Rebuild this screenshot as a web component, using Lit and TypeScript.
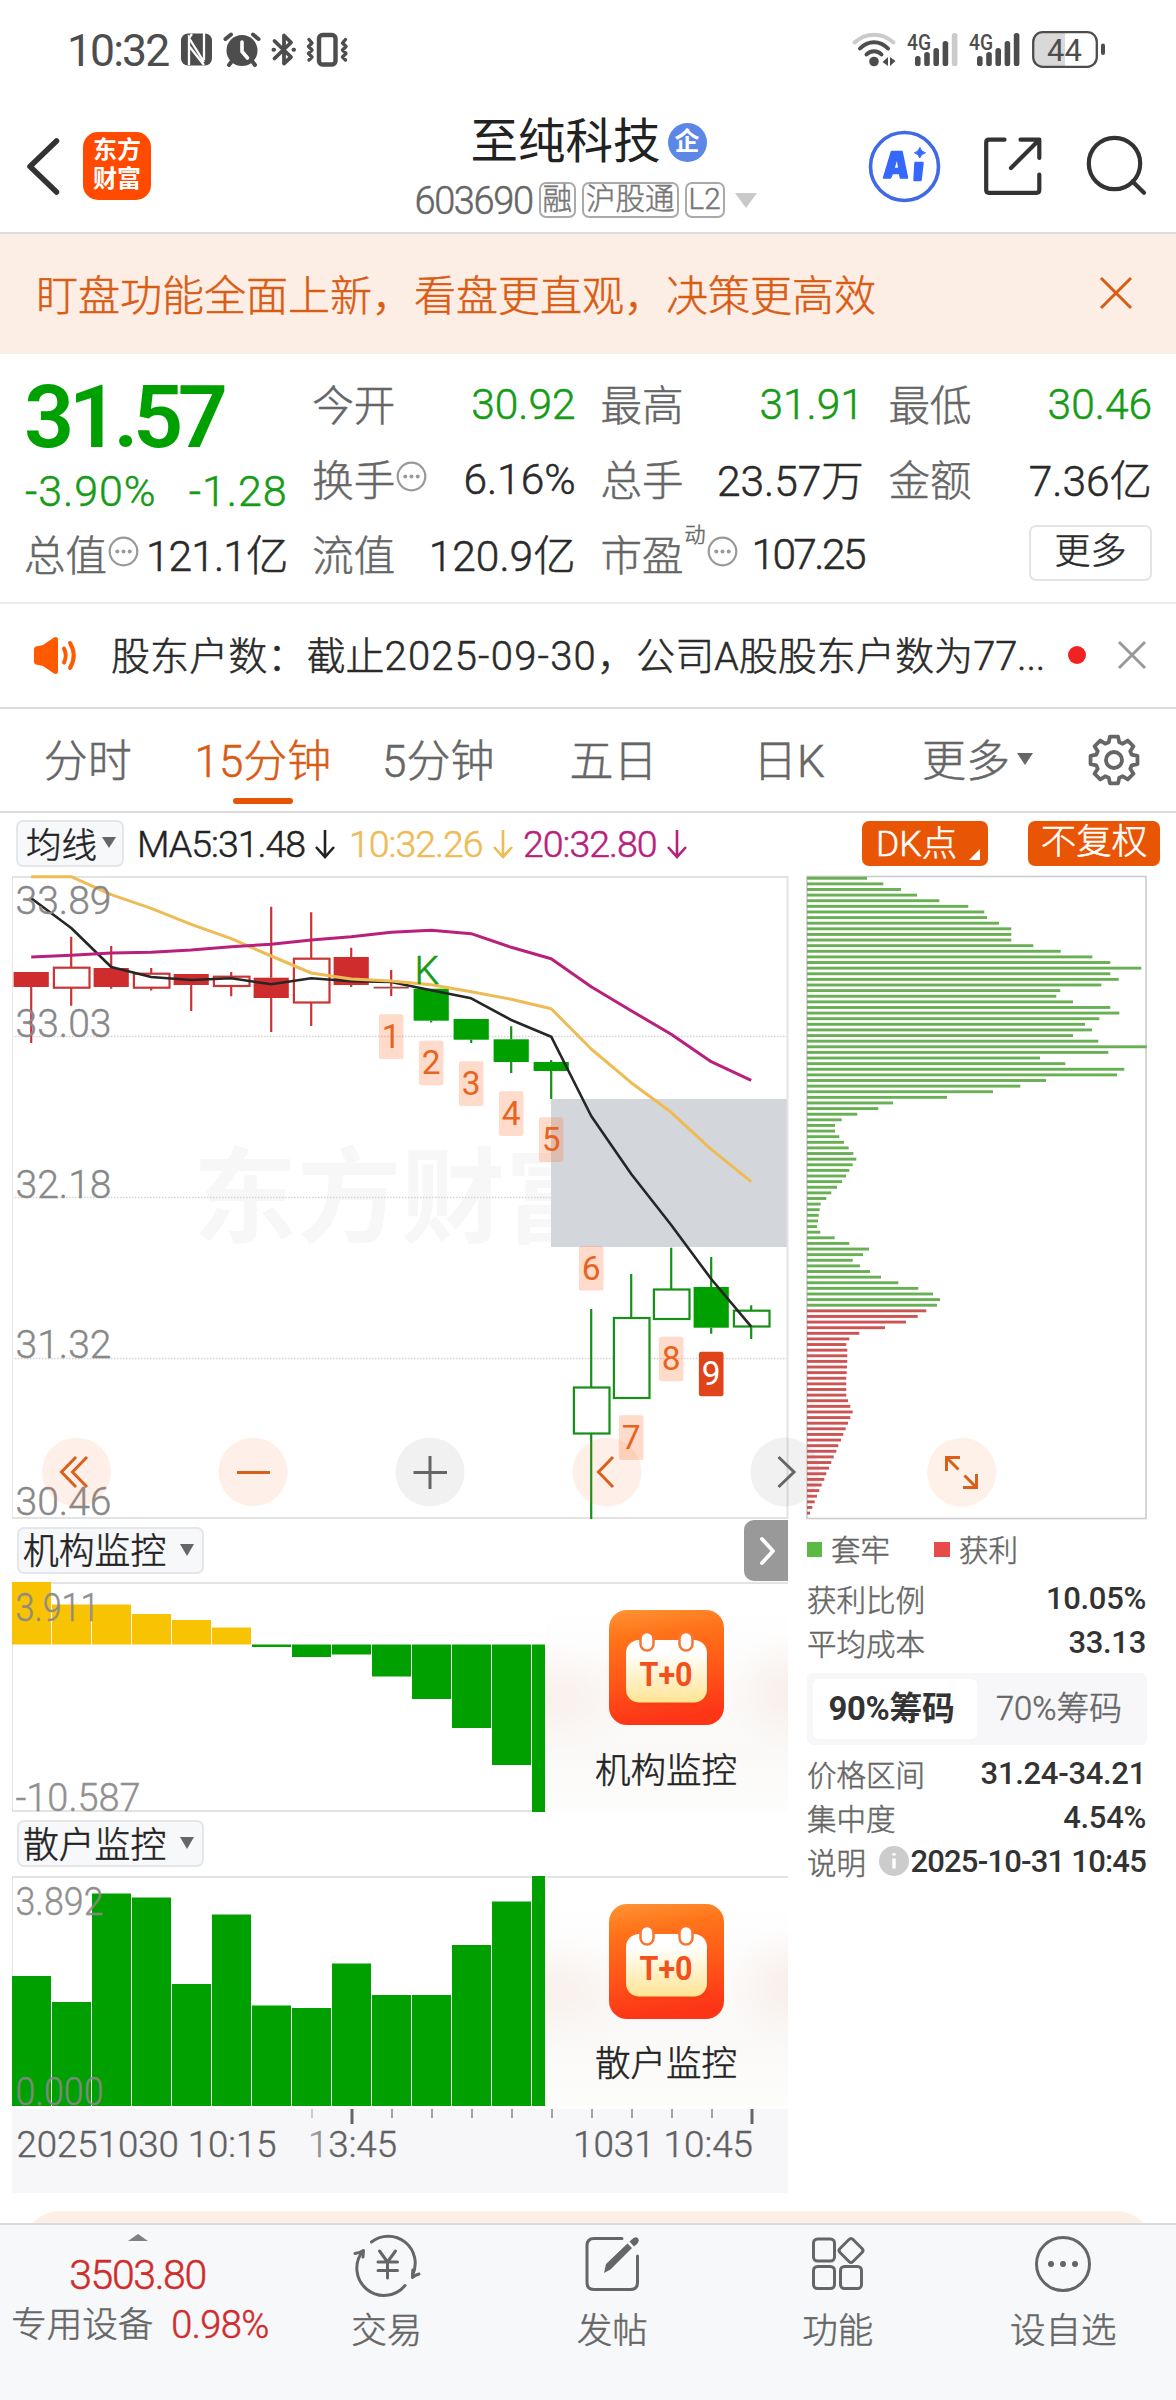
import { LitElement, html, svg, css } from "lit";
import { customElement, property } from "lit/decorators.js";

const base = css`
  :host {
    display: block;
    box-sizing: border-box;
    font-family: Roboto, "Noto Sans CJK SC", sans-serif;
    font-weight: 300;
    -webkit-text-stroke: 0.5px currentColor;
    color: #333;
  }
  * {
    box-sizing: border-box;
  }
  svg {
    display: block;
    flex: none;
    overflow: visible;
  }
`;

/* ---------- status bar ---------- */

@customElement("status-bar")
export class StatusBar extends LitElement {
  static styles = [
    base,
    css`
      :host {
        height: 100px;
        font-weight: 400;
        -webkit-text-stroke: 0;
      }
      .bar {
        display: flex;
        justify-content: space-between;
        padding: 28px 70px 0 67px;
      }
      .left {
        display: flex;
        align-items: center;
        height: 44px;
      }
      .time {
        font-size: 44.5px;
        letter-spacing: -1.9px;
        width: 113px;
        padding-top: 2px;
        color: #4d4d4d;
        white-space: nowrap;
      }
      text {
        font-family: Roboto, sans-serif;
        fill: #4d4d4d;
      }
    `,
  ];

  private signal(x: number, full: boolean) {
    const tops = [56, 52, 48, 41, 33];
    return svg`
      <text x=${x - 1} y="49.5" font-size="22.5" font-weight="500" textLength="24" lengthAdjust="spacingAndGlyphs">4G</text>
      ${tops.map(
        (t, i) => svg`<rect x=${x + 7 + i * 9.2} y=${t} width="5.6" height=${66 - t} rx="2.6"
          fill=${i === 4 && !full ? "#cbcbcb" : "#4d4d4d"} />`
      )}`;
  }

  render() {
    return html`<div class="bar">
      <div class="left">
        <span class="time">10:32</span>
        <svg width="170" height="44" viewBox="180 28 170 44">
          <rect x="181" y="33.500" width="31" height="32" rx="7" fill="#4d4d4d" />
          <path d="M189 65V38L204 62M189 46L204 65M204 33V60M189 38L192 34" fill="none" stroke="#fff" stroke-width="2.300" />
          <path d="M193.500 41L201.500 54V42.500L194 33.500Z" fill="#4d4d4d" />
          <g fill="none" stroke="#4d4d4d" stroke-linecap="round">
            <circle cx="242" cy="50.500" r="15.500" fill="#4d4d4d" stroke="none" />
            <path d="M225.500 39L231 34.500M258.500 39L253 34.500M232 61L229 65M252 61L255 65" stroke-width="4" />
            <path d="M242 42V51.500L247.500 58" stroke="#fff" stroke-width="3.600" />
            <path d="M274.500 41L291 57L284 63.500V35.500L291 42.500L274.500 58.500" stroke-width="3.800" stroke-linejoin="round" />
            <path d="M273.500 49.700H274M293.500 49.700H294" stroke-width="4" />
            <rect x="319" y="35" width="16.500" height="29.500" rx="3.500" stroke-width="4.400" />
            <path d="M309 39.500L312 43L308.500 46.500L312 50L308.500 53.500L312 57L309 60M345.500 39.500L342.500 43L346 46.500L342.500 50L346 53.500L342.500 57L345.500 60" stroke-width="3.400" stroke-linejoin="round" />
          </g>
        </svg>
      </div>
      <svg width="256" height="44" viewBox="850 28 256 44">
        <g fill="none" stroke="#4d4d4d" stroke-linecap="round" stroke-width="4">
          <path d="M854.500 42.500C866 32 882 32 893.500 42.500" stroke="#cbcbcb" />
          <path d="M860 48.500C868 40 880 40 888 48.500M866.500 54.500C870.500 50 877.500 50 881.500 54.500" />
        </g>
        <circle cx="874" cy="61.500" r="4.800" fill="#4d4d4d" />
        <path d="M888 57V66L882.500 62ZM890 57V66L895.500 61Z" fill="#4d4d4d" />
        ${this.signal(908, false)} ${this.signal(970, true)}
        <path d="M1065 33V66H1042Q1034 66 1034 58V41Q1034 33 1042 33Z" fill="#d9d9d9" />
        <rect x="1033.200" y="32.200" width="63.600" height="34.600" rx="9.500" fill="none" stroke="#4d4d4d" stroke-width="2.300" />
        <rect x="1101" y="43.500" width="4" height="11.500" rx="2" fill="#4d4d4d" />
        <text x="1047" y="61" font-size="31" textLength="35">44</text>
      </svg>
    </div>`;
  }
}

/* ---------- title bar ---------- */

@customElement("stock-header")
export class StockHeader extends LitElement {
  static styles = [
    base,
    css`
      :host {
        height: 134px;
        border-bottom: 2px solid #dcdcdc;
      }
      .row {
        display: grid;
        grid-template-columns: 400px 376px 400px;
        height: 132px;
      }
      .left {
        display: flex;
        align-items: center;
        gap: 22px;
        padding-left: 26px;
      }
      .logo {
        width: 68px;
        height: 68px;
        border-radius: 15px;
        background: #ff4a00;
        color: #fff;
        font-weight: 700;
        -webkit-text-stroke: 0;
        font-size: 24px;
        line-height: 29px;
        text-align: center;
        padding-top: 4px;
      }
      .mid {
        display: flex;
        flex-direction: column;
        align-items: center;
        padding-top: 10px;
      }
      .name {
        display: flex;
        align-items: center;
        gap: 7px;
        height: 64px;
        font-size: 47.5px;
        line-height: 64px;
        color: #222;
        font-weight: 400;
        -webkit-text-stroke: 0;
        margin-left: 1px;
      }
      .corp {
        width: 39px;
        height: 39px;
        border-radius: 50%;
        background: #5c87e6;
        color: #fff;
        font-size: 25px;
        font-weight: 700;
        line-height: 38px;
        text-align: center;
      }
      .meta {
        display: flex;
        align-items: center;
        height: 36px;
        margin-top: 8px;
        gap: 6px;
        color: #666;
        margin-left: -5px;
      }
      .code {
        font-size: 38px;
        letter-spacing: -1.4px;
        color: #666;
        padding-top: 2px;
      }
      .tag {
        height: 36px;
        border: 2px solid #aaa;
        border-radius: 7px;
        line-height: 31px;
        font-size: 29.5px;
        padding: 0 2px;
        color: #777;
      }
      .tri {
        border: 11.5px solid transparent;
        border-top: 15px solid #c9c9c9;
        border-bottom: 0;
        margin-left: 4px;
      }
      .right {
        display: flex;
        justify-content: flex-end;
        align-items: center;
        padding-right: 26px;
        padding-top: 2px;
      }
    `,
  ];

  render() {
    return html`<div class="row">
      <div class="left">
        <svg width="35" height="60" viewBox="26 136 35 60">
          <path d="M56.500 141L30 166.500L56.500 192" fill="none" stroke="#333" stroke-width="5.500" stroke-linecap="round" stroke-linejoin="round" />
        </svg>
        <div class="logo">东方<br />财富</div>
      </div>
      <div class="mid">
        <div class="name">至纯科技<span class="corp">企</span></div>
        <div class="meta">
          <span class="code">603690</span>
          <span class="tag">融</span><span class="tag">沪股通</span><span class="tag">L2</span>
          <i class="tri"></i>
        </div>
      </div>
      <div class="right">
        <svg width="282" height="76" viewBox="868 129 282 76">
          <circle cx="904.500" cy="166.500" r="34" fill="none" stroke="#4069e5" stroke-width="3.600" />
          <g fill="#3568fb" stroke="#3568fb" stroke-width="2.500" stroke-linejoin="round">
            <path fill-rule="evenodd" d="M883.500 178L891.500 151.500H902L907.500 178H900.500L899.500 173.500H892.500L890.500 178ZM893.800 168.500H898.800L897.500 159.500H896.600Z" stroke-width="1.500" />
            <path d="M915.500 163H922.500L920.500 180H914.500Z" />
            <path d="M919.800 147.500Q921 152 925.500 152.800Q921 153.800 919.800 158Q918.500 153.800 914.500 152.800Q918.500 152 919.800 147.500Z" stroke-width="1" />
          </g>
          <g fill="none" stroke="#333" stroke-width="4.200" stroke-linecap="round" stroke-linejoin="round">
            <path d="M1004.500 139.700H989Q986.200 139.700 986.200 142.500V190Q986.200 192.800 989 192.800H1036.500Q1039.300 192.800 1039.300 190V174.500" />
            <path d="M1020.500 139.700H1039.300V158M1038 141L1011 168" />
            <circle cx="1114.500" cy="163.500" r="25.700" />
            <path d="M1132.500 181.500L1144 192.800" />
          </g>
        </svg>
      </div>
    </div>`;
  }
}

/* ---------- banner ---------- */

@customElement("promo-banner")
export class PromoBanner extends LitElement {
  static styles = [
    base,
    css`
      :host {
        height: 120px;
        background: #fdeee5;
      }
      .row {
        display: flex;
        height: 117px;
        align-items: center;
        justify-content: space-between;
        padding: 0 43px 0 36px;
        font-size: 42px;
        color: #d95c15;
        white-space: nowrap;
      }
    `,
  ];
  render() {
    return html`<div class="row">
      <span>盯盘功能全面上新，看盘更直观，决策更高效</span>
      <svg width="34" height="34" viewBox="0 0 34 34">
        <path d="M2 2L32 32M32 2L2 32" stroke="#d95c15" stroke-width="3" />
      </svg>
    </div>`;
  }
}

/* ---------- quote ---------- */

@customElement("quote-panel")
export class QuotePanel extends LitElement {
  static styles = [
    base,
    css`
      :host {
        height: 250px;
        border-bottom: 2px solid #ededed;
        padding: 11px 24px 0;
      }
      .grid {
        display: grid;
        grid-template-columns: repeat(4, 263.5px);
        grid-template-rows: repeat(3, 75px);
        column-gap: 24.7px;
      }
      .price {
        grid-row: span 2;
        color: #00a000;
        display: flex;
        flex-direction: column;
      }
      .last {
        font-size: 88px;
        font-weight: 600;
        -webkit-text-stroke: 0;
        line-height: 104px;
        letter-spacing: -5.5px;
        height: 101px;
      }
      .chg {
        display: flex;
        justify-content: space-between;
        font-size: 43px;
        line-height: 50px;
        padding: 0 0 0 1px;
        letter-spacing: 0.9px;
        color: #169b16;
      }
      .cell {
        display: flex;
        align-items: center;
        justify-content: space-between;
        white-space: nowrap;
        font-size: 42px;
      }
      .label {
        display: flex;
        align-items: center;
        color: #666;
        font-size: 41.5px;
        letter-spacing: 0;
      }
      .label svg {
        margin: -2px 0 0 1px;
      }
      .sup {
        font-size: 21px;
        line-height: 21px;
        margin: -34px 1px 0 1px;
      }
      .num {
        font-size: 42.5px;
        color: #2a2a2a;
      }
      .up {
        color: #169b16;
      }
      .latin {
        padding-top: 4px;
      }
      .tight {
        letter-spacing: -0.9px;
      }
      .tighter {
        letter-spacing: -2.6px;
      }
      .more {
        justify-content: flex-end;
      }
      .btn {
        width: 123px;
        height: 56px;
        border: 2px solid #e4e4e4;
        border-radius: 7px;
        text-align: center;
        line-height: 50px;
        font-size: 36px;
        color: #2a2a2a;
      }
    `,
  ];

  private info() {
    return html`<svg width="31" height="31" viewBox="0 0 31 31">
      <circle cx="15.500" cy="15.500" r="13.800" fill="none" stroke="#999" stroke-width="2.200" />
      <g fill="#999"><circle cx="9.300" cy="15.500" r="2" /><circle cx="15.500" cy="15.500" r="2" /><circle cx="21.700" cy="15.500" r="2" /></g>
    </svg>`;
  }

  private cell(label: unknown, value: string, cls = "") {
    return html`<div class="cell"><span class="label">${label}</span><span class="num ${cls}">${value}</span></div>`;
  }

  render() {
    return html`<div class="grid">
      <div class="price">
        <div class="last">31.57</div>
        <div class="chg"><span>-3.90%</span><span>-1.28</span></div>
      </div>
      ${this.cell("今开", "30.92", "up latin")} ${this.cell("最高", "31.91", "up latin")} ${this.cell("最低", "30.46", "up latin")}
      ${this.cell(html`换手${this.info()}`, "6.16%", "latin")} ${this.cell("总手", "23.57万")} ${this.cell("金额", "7.36亿")}
      ${this.cell(html`总值${this.info()}`, "121.1亿", "tight")} ${this.cell("流值", "120.9亿")}
      ${this.cell(html`市盈<span class="sup">动</span>${this.info()}`, "107.25", "tighter latin")}
      <div class="cell more"><div class="btn">更多</div></div>
    </div>`;
  }
}

/* ---------- news ---------- */

@customElement("news-row")
export class NewsRow extends LitElement {
  static styles = [
    base,
    css`
      :host {
        height: 105px;
        border-bottom: 2px solid #dadada;
      }
      .row {
        display: flex;
        align-items: center;
        height: 102px;
        padding: 0 29px 0 32px;
      }
      .text {
        flex: none;
        margin: -5px 0 0 33px;
        width: 935px;
        font-size: 39.1px;
        color: #2a2a2a;
        white-space: nowrap;
      }
      .date {
        font-size: 40px;
        letter-spacing: 1.2px;
      }
      .tail {
        font-size: 40px;
        letter-spacing: -0.2px;
      }
      .dot {
        flex: none;
        width: 18px;
        height: 18px;
        border-radius: 50%;
        background: #f02222;
        margin: 0 31px 0 22px;
      }
    `,
  ];
  render() {
    return html`<div class="row">
      <svg width="46" height="38" viewBox="32 636 46 38">
        <path d="M34 649Q34 647 36 646.500L43 645L54 637.500Q58 636 58 640V671Q58 675 54 673.500L43 666L36 664.500Q34 664 34 662Z" fill="#ff5a00" />
        <path d="M64 648.500Q67.500 655.500 64 662.500M70 643Q77.500 655.500 70 668" fill="none" stroke="#ff5a00" stroke-width="4" stroke-linecap="round" />
      </svg>
      <span class="text">股东户数：截止<span class="date">2025-09-30</span>，公司A股股东户数为<span class="tail">77...</span></span>
      <i class="dot"></i>
      <svg width="30" height="30" viewBox="0 0 30 30">
        <path d="M2 2L28 28M28 2L2 28" stroke="#999" stroke-width="3" />
      </svg>
    </div>`;
  }
}

/* ---------- period tabs ---------- */

@customElement("period-tabs")
export class PeriodTabs extends LitElement {
  static styles = [
    base,
    css`
      :host {
        height: 104px;
        border-bottom: 2px solid #dadada;
      }
      .row {
        display: flex;
        height: 102px;
      }
      .tab {
        width: 175.3px;
        display: flex;
        flex-direction: column;
        align-items: center;
        font-size: 44px;
        line-height: 60px;
        padding-top: 23px;
        color: #666;
        white-space: nowrap;
      }
      .tab.on {
        color: #d95c15;
      }
      .line {
        width: 60px;
        height: 6px;
        border-radius: 3px;
        background: #e65505;
        margin-top: 6px;
      }
      .more {
        flex-direction: row;
        justify-content: center;
        align-items: flex-start;
        width: 202px;
        gap: 7px;
      }
      .tri {
        border: 8px solid transparent;
        border-top: 12px solid #666;
        border-bottom: 0;
        margin-top: 21px;
      }
      .gear {
        padding-top: 25px;
        margin-left: 10px;
      }
    `,
  ];
  render() {
    const teeth = Array.from({ length: 8 }, (_, i) => {
      const a = (i * Math.PI) / 4 - Math.PI / 2;
      const p = (r: number, d: number) => `${(26 + r * Math.cos(a + d)).toFixed(2)} ${(26 + r * Math.sin(a + d)).toFixed(2)}`;
      return `${p(18.5, -0.29)}L${p(23.8, -0.17)}L${p(23.8, 0.17)}L${p(18.5, 0.29)}`;
    }).join("L");
    return html`<div class="row">
      ${["分时", "15分钟", "5分钟", "五日", "日K"].map(
        (t, i) => html`<div class="tab ${i === 1 ? "on" : ""}">${t}${i === 1 ? html`<i class="line"></i>` : ""}</div>`
      )}
      <div class="tab more">更多<i class="tri"></i></div>
      <div class="gear">
        <svg width="52" height="52" viewBox="0 0 52 52">
          <path d="M${teeth}Z" fill="none" stroke="#666" stroke-width="3.800" stroke-linejoin="round" />
          <circle cx="26" cy="26" r="8" fill="none" stroke="#666" stroke-width="3.800" />
        </svg>
      </div>
    </div>`;
  }
}

/* ---------- moving-average strip ---------- */

@customElement("ma-strip")
export class MaStrip extends LitElement {
  static styles = [
    base,
    css`
      :host {
        height: 63px;
        padding: 7px 16px 0;
      }
      .row {
        display: flex;
        align-items: center;
        height: 47px;
        font-size: 37.5px;
        white-space: nowrap;
      }
      .pick {
        display: flex;
        align-items: center;
        gap: 5px;
        width: 108px;
        height: 47px;
        background: #f7f8fa;
        border: 2px solid #e4e6ea;
        border-radius: 7px;
        padding: 0 0 3px 8px;
        font-size: 35.5px;
        color: #222;
        margin-right: 13px;
      }
      .tri {
        border: 7px solid transparent;
        border-top: 11px solid #666;
        border-bottom: 0;
      }
      .ma {
        display: flex;
        align-items: center;
        letter-spacing: -1px;
        color: #222;
        gap: 10px;
      }
      .m5 {
        width: 212px;
      }
      .m10 {
        color: #eebb55;
        width: 174px;
      }
      .m20 {
        color: #b8207c;
      }
      .btn {
        height: 45px;
        background: #e85505;
        color: #fff;
        border-radius: 7px;
        line-height: 43px;
        font-size: 35.5px;
        text-align: center;
      }
      .dk {
        width: 126px;
        display: flex;
        align-items: flex-end;
        padding-left: 14px;
        margin-left: auto;
        gap: 12px;
      }
      .corner {
        border-left: 11px solid transparent;
        border-bottom: 11px solid #fff;
        margin-bottom: 6px;
      }
      .fq {
        width: 132px;
        margin-left: 40px;
      }
    `,
  ];
  private arrow(color: string) {
    return html`<svg width="20" height="30" viewBox="0 0 20 30">
      <path d="M10 1V27M1 18L10 28L19 18" fill="none" stroke=${color} stroke-width="2.600" />
    </svg>`;
  }
  render() {
    return html`<div class="row">
      <div class="pick">均线<i class="tri"></i></div>
      <div class="ma m5"><span>MA5:31.48</span>${this.arrow("#222")}</div>
      <div class="ma m10"><span>10:32.26</span>${this.arrow("#eebb55")}</div>
      <div class="ma m20"><span>20:32.80</span>${this.arrow("#b8207c")}</div>
      <div class="btn dk">DK点<i class="corner"></i></div>
      <div class="btn fq">不复权</div>
    </div>`;
  }
}

/* ---------- candlestick chart ---------- */

type Candle = [hollow: boolean, top: number, bottom: number, high: number, low: number];

const CANDLES: Candle[] = [
  [false, 972, 987, 972, 1043],
  [true, 967.7, 987.7, 936.7, 1005.7],
  [false, 968, 987, 946, 988.7],
  [true, 973.7, 987.7, 968, 990.5],
  [false, 974, 985, 974, 1011],
  [true, 976.7, 986, 972, 996.3],
  [false, 977.7, 998, 906.7, 1032],
  [true, 958.7, 1002.5, 912.3, 1026],
  [false, 957, 985, 947.7, 987],
  [false, 986.7, 988.5, 970, 996],
  [false, 988.7, 1020.7, 988.7, 1022.5],
  [false, 1019, 1039.7, 1019, 1043],
  [false, 1039.3, 1062, 1026.3, 1073],
  [false, 1062, 1071, 1060, 1099],
  [true, 1387.5, 1433.5, 1309, 1519],
  [true, 1318, 1398, 1274, 1398],
  [true, 1289.5, 1319, 1247.7, 1319],
  [false, 1287, 1327.7, 1257, 1333.7],
  [true, 1310.7, 1326.5, 1305.3, 1339],
];

const MA5 = [898.3, 928, 967, 977, 980, 978.3, 984.3, 978.3, 981.3, 982, 990.3, 998.3, 1020, 1036.7, 1116, 1174, 1225, 1279, 1326.7];
const MA10 = [876.7, 876.7, 894.7, 908.3, 924.3, 938.7, 956, 973, 979, 981, 984.7, 991.7, 999.3, 1008.7, 1049, 1082.7, 1112.3, 1149.3, 1181.7];
const MA20 = [957, 955.3, 953, 952.3, 950, 946.7, 944.3, 940, 936.7, 932.3, 930.3, 933.7, 947.3, 958.7, 986.7, 1010.7, 1034.3, 1061.7, 1080.3];

const COUNTS = [1014.3, 1040.7, 1061.3, 1091.3, 1117.3, 1246, 1415.3, 1336.7, 1351.7];

const cx = (i: number) => 31.2 + 40 * i;
const line = (v: number[]) => v.map((y, i) => `${cx(i)},${y}`).join(" ");

@customElement("price-chart")
export class PriceChart extends LitElement {
  static styles = [
    base,
    css`
      text {
        font-family: Roboto, "Noto Sans CJK SC", sans-serif;
      }
      .axis {
        font-size: 39.5px;
        fill: #888;
        stroke: #888;
        stroke-width: 0.4px;
      }
      .k {
        font-size: 39px;
        fill: #169b16;
        stroke: #169b16;
        stroke-width: 0.6px;
      }
      .mark {
        font-size: 104px;
        font-weight: 700;
        fill: #f7f7f8;
      }
    `,
  ];

  render() {
    return html`<svg width="776" height="643" viewBox="12 876 776 643">
      <text class="mark" x="193" y="1235">东方财富</text>
      <g stroke="#d4d4d4" stroke-width="1.500" stroke-dasharray="1.500 1.500">
        <path d="M12 1036.500H788M12 1197.500H788M12 1358.500H788" />
      </g>
      <rect x="551" y="1099" width="237" height="148" fill="#d3d6db" />
      <path d="M12.500 876V1519" stroke="#e6e6e6" />
      <path d="M12 877H788M12 1518H788M787.500 876V1519" stroke="#e3e3e3" stroke-width="2" />
      ${CANDLES.map(([hollow, top, bottom, high, low], i) => {
        const c = i < 10 ? "#cf2d2d" : "#00a000";
        const s = i === 9 ? "#a04a44" : i < 10 ? "#c93434" : "#169016";
        const x = cx(i);
        return svg`<g stroke=${s} stroke-width="2.200">
          <path d="M${x} ${high}V${top}M${x} ${bottom}V${low}" stroke=${i === 9 ? "#cf2d2d" : s} />
          ${
            hollow
              ? svg`<rect x=${x - 17.3} y=${top} width="35.600" height=${bottom - top} fill="#fff" />`
              : svg`<rect x=${x - 17.6} y=${top} width="35.200" height=${bottom - top} fill=${i === 9 ? s : c} stroke="none" />`
          }
        </g>`;
      })}
      <g fill="none" stroke-linejoin="round">
        <polyline points=${line(MA5)} stroke="#262626" stroke-width="2.600" />
        <polyline points=${line(MA10)} stroke="#eebb55" stroke-width="3" />
        <polyline points=${line(MA20)} stroke="#b8207c" stroke-width="3" />
      </g>
      <text class="k" x="414.500" y="984">K</text>
      ${COUNTS.map((y, i) => {
        const last = i === 8;
        const x = cx(i + 9);
        return svg`<rect x=${x - 12.3} y=${y} width="24.600" height="44.600" rx="2.500"
            fill=${last ? "#e0441a" : "rgba(250,125,70,.28)"} />
          <text x=${x} y=${y + 33.7} font-size="33.500" font-weight="400" text-anchor="middle" fill=${last ? "#fff" : "#e8641e"}>${i + 1}</text>`;
      })}
      ${[
        ["33.89", 914],
        ["33.03", 1037],
        ["32.18", 1198],
        ["31.32", 1358],
        ["30.46", 1515],
      ].map(([t, y]) => svg`<text class="axis" x="15.500" y=${y} textLength="96" lengthAdjust="spacingAndGlyphs">${t}</text>`)}
      ${[76.5, 253, 430, 607, 785].map(
        (x, i) => svg`<circle cx=${x} cy="1472" r="34.500" fill=${i === 2 || i === 4 ? "rgba(120,120,120,.1)" : "rgba(250,120,50,.11)"} />`
      )}
      <g fill="none" stroke-width="3">
        <path d="M76 1457L61.500 1472L76 1487M87 1457L72.500 1472L87 1487" stroke="#d9601a" />
        <path d="M237 1472.500H270" stroke="#d9601a" />
        <path d="M430 1456V1489M413.500 1472.500H447" stroke="#666" />
        <path d="M613 1457L598.500 1472L613 1487" stroke="#d9601a" />
        <path d="M778.500 1457L794 1472L778.500 1487" stroke="#666" />
      </g>
    </svg>`;
  }
}

/* ---------- indicator charts ---------- */

@customElement("indicator-chart")
export class IndicatorChart extends LitElement {
  @property() name = "";
  @property({ type: Boolean }) expander = false;
  @property({ type: Number }) zero = 0;
  @property({ attribute: false }) values: number[] = [];
  @property({ attribute: false }) labels: string[] = [];

  static styles = [
    base,
    css`
      .head {
        display: flex;
        align-items: center;
        justify-content: space-between;
        height: 62px;
        padding-left: 5px;
      }
      .pick {
        display: flex;
        align-items: center;
        gap: 15px;
        width: 187px;
        height: 47px;
        margin-top: -2px;
        padding: 0 0 4px 4px;
        border: 2px solid #e4e6ea;
        border-radius: 7px;
        background: #f7f8fa;
        font-size: 35.8px;
        color: #222;
        white-space: nowrap;
      }
      .tri {
        border: 7.5px solid transparent;
        border-top: 12px solid #666;
        border-bottom: 0;
        margin-top: 3px;
        margin-left: -1px;
      }
      .next {
        width: 44px;
        height: 61px;
        margin-top: -1px;
        border-radius: 10px 0 0 10px;
        background: #999;
        display: flex;
        align-items: center;
        justify-content: center;
      }
      .axis {
        font-family: Roboto, sans-serif;
        font-size: 38px;
        fill: #888;
        stroke: #888;
        stroke-width: 0.4px;
        opacity: 0.93;
      }
      .body {
        display: grid;
        grid-template-columns: 533px 242px;
        height: 230px;
        border: 2px solid #e3e3e3;
        border-left-width: 1px;
      }
      .body svg.plot {
        margin: -2px 0 0 -1px;
      }
      .promo {
        display: flex;
        flex-direction: column;
        align-items: center;
        padding: 26px 2px 0 0;
        font-size: 35.5px;
        line-height: 52px;
        color: #222;
        gap: 19.5px;
        background: radial-gradient(ellipse 100px 55px at 0 50%, #f8f0ec, rgba(248, 240, 236, 0) 100%),
          radial-gradient(ellipse 60px 60px at 100% 48%, #f7efeb, rgba(247, 239, 235, 0) 100%),
          linear-gradient(#fff 10%, #fbfaf9 50%, #faf9f7 75%, #fdfdfc);
      }
    `,
  ];

  render() {
    const z = this.zero;
    return html`<div class="head">
        <div class="pick">${this.name}<i class="tri"></i></div>
        ${this.expander
          ? html`<div class="next">
              <svg width="18" height="30" viewBox="0 0 18 30">
                <path d="M5 3L16 15L5 27" fill="none" stroke="#fff" stroke-width="3.800" stroke-linecap="round" stroke-linejoin="round" />
              </svg>
            </div>`
          : ""}
      </div>
      <div class="body">
        <svg class="plot" width="533" height="230" viewBox="0 0 533 230">
          ${this.values.map((v, i) => {
            const last = i === this.values.length - 1;
            return svg`<rect x=${i * 40} y=${Math.min(v, z)} width=${last ? 13 : 39} height=${Math.abs(v - z)}
              fill=${v < z && z < 200 ? "#f8c303" : "#00a000"} />`;
          })}
          <text class="axis" x="3.500" y="38.500" textLength=${this.labels[0] === "3.911" ? 84 : 88} lengthAdjust="spacingAndGlyphs">${this.labels[0]}</text>
          <text class="axis" x="3.500" y="228.500" textLength=${this.labels[1].length > 5 ? 125 : 88} lengthAdjust="spacingAndGlyphs">${this.labels[1]}</text>
        </svg>
        <div class="promo">
          <svg width="115" height="115" viewBox="0 0 115 115">
            <defs>
              <linearGradient id="bg" x1="0" y1="0" x2="0.15" y2="1">
                <stop offset="0" stop-color="#ff9436" /><stop offset=".25" stop-color="#ff7419" />
                <stop offset=".65" stop-color="#ff5518" /><stop offset="1" stop-color="#fd3517" />
              </linearGradient>
              <linearGradient id="pg" x1="0" y1="0" x2="0" y2="1">
                <stop offset=".2" stop-color="#fff" /><stop offset="1" stop-color="#ffe493" />
              </linearGradient>
            </defs>
            <rect width="115" height="115" rx="18" fill="url(#bg)" />
            <rect x="19" y="35" width="80" height="61" rx="13" fill="#f23a10" opacity=".4" />
            <rect x="17" y="30" width="81" height="62.500" rx="13" fill="url(#pg)" />
            <g fill="#fff" stroke="#f9762f" stroke-width="2.500">
              <rect x="31.500" y="22" width="13" height="18.500" rx="6.500" />
              <rect x="70.500" y="22" width="13" height="18.500" rx="6.500" />
            </g>
            <g font-family="Roboto, sans-serif" font-weight="700" font-size="32.500" fill="#f2501c">
              <text x="30.500" y="76" textLength="53" lengthAdjust="spacingAndGlyphs">T+0</text>
            </g>
          </svg>
          ${this.name}
        </div>
      </div>`;
  }
}

@customElement("time-axis")
export class TimeAxis extends LitElement {
  static styles = [
    base,
    css`
      :host {
        margin-top: 3px;
        background: #f7f7fa;
        height: 84px;
      }
      text {
        font-family: Roboto, sans-serif;
        font-size: 37.5px;
        fill: #606060;
        stroke: #606060;
        stroke-width: 0.4px;
      }
      .faded {
        fill: url(#fade);
        stroke: url(#fade);
      }
    `,
  ];
  render() {
    return html`<svg width="776" height="84" viewBox="12 2109 776 84">
      <defs>
        <linearGradient id="fade" gradientUnits="userSpaceOnUse" x1="308" y1="0" x2="336" y2="0">
          <stop offset="0" stop-color="#606060" stop-opacity=".4" /><stop offset="1" stop-color="#606060" />
        </linearGradient>
      </defs>
      <path d="M312 2109V2118" stroke="#bbb" stroke-width="1.500" />
      <path d=${[392, 432, 472, 512, 552, 592, 632, 672, 712].map((x) => `M${x} 2109V2118`).join("")} stroke="#888" stroke-width="1.500" />
      <path d="M352 2109V2124M752 2109V2124" stroke="#666" stroke-width="3" />
      <text x="16.500" y="2157" textLength="260" lengthAdjust="spacingAndGlyphs">20251030 10:15</text>
      <text class="faded" x="308" y="2157" textLength="89" lengthAdjust="spacingAndGlyphs">13:45</text>
      <text x="573" y="2157" textLength="180" lengthAdjust="spacingAndGlyphs">1031 10:45</text>
    </svg>`;
  }
}

/* ---------- chip distribution ---------- */

const TRAPPED = [
  60, 76.3, 94, 110, 132.3, 161.3, 177.3, 180, 192, 204.3, 204.3, 204.3, 226.3, 253.7, 285.3, 303.3, 334.3, 303.3, 311.7, 294.3,
  253.3, 249.3, 266, 303.3, 312.3, 292.3, 278, 285, 266, 291.3, 339.7, 301.3, 233, 258.3, 317.3, 310, 239, 213.3, 186, 140,
  86, 71.3, 50.3, 34.7, 28, 28, 32.3, 37, 41.7, 46.3, 49.3, 45.7, 42.3, 39, 35, 30, 24.3, 19.3, 13.7, 12.7,
  11.7, 11, 10, 13.3, 27.7, 42.3, 62, 56, 45.7, 53, 63, 74, 91.3, 111.3, 126, 133, 130,
];
const PROFIT = [
  119.3, 110.7, 99, 78, 52.3, 42.3, 39.3, 40.3, 40.3, 40.3, 40, 39.7, 39.3, 39.3, 39.3, 39.3, 41, 43.3, 45.7, 43.3,
  41, 38.7, 36.3, 34, 31.3, 29.3, 26.7, 24.3, 22, 19.3, 17.3, 14.7, 12.3, 10, 7.7, 5.3, 3,
];

@customElement("chip-panel")
export class ChipPanel extends LitElement {
  static styles = [
    base,
    css`
      :host {
        width: 340px;
      }
      .legend {
        display: flex;
        align-items: center;
        height: 42px;
        margin-top: 8px;
        font-size: 29.5px;
        color: #666;
      }
      .sq {
        width: 15px;
        height: 15px;
        margin: 2px 9px 0 0;
        background: #5cb944;
      }
      .sq.red {
        background: #e84b4b;
        margin-left: 44px;
        width: 16px;
      }
      .row {
        display: flex;
        align-items: center;
        justify-content: space-between;
        height: 44px;
        font-size: 29.5px;
        color: #666;
        white-space: nowrap;
      }
      .row b {
        font-weight: 500;
        -webkit-text-stroke: 0;
        font-size: 31px;
        letter-spacing: -0.3px;
        color: #333;
        padding: 1px 1px 0 0;
      }
      .row b.stamp {
        letter-spacing: -0.8px;
      }
      .first {
        margin-top: 7px;
      }
      .seg {
        display: grid;
        grid-template-columns: 164px 1fr;
        height: 72px;
        margin: 9px 0 6px;
        background: #f7f7fa;
        border-radius: 6px;
        padding: 6px;
        font-size: 32.8px;
        line-height: 61px;
        text-align: center;
        color: #666;
      }
      .seg .on {
        height: 60px;
        background: #fff;
        border-radius: 6px;
        font-weight: 700;
        -webkit-text-stroke: 0;
        color: #333;
        letter-spacing: -0.3px;
        padding-right: 7px;
      }
      .note {
        display: flex;
        align-items: center;
        gap: 13px;
      }
    `,
  ];
  private row(k: string, v: string, cls = "") {
    return html`<div class="row ${cls}"><span>${k}</span><b>${v}</b></div>`;
  }
  render() {
    return html`<svg width="340" height="643" viewBox="807 876 340 643">
        <rect x="807" y="876.500" width="339" height="642" fill="none" stroke="#ccc" stroke-width="1.600" />
        ${[...TRAPPED, ...PROFIT].map(
          (w, i) =>
            svg`<rect x="807" y=${(876.8 + i * 5.618).toFixed(2)} width=${w} height="2.900" fill=${i < TRAPPED.length ? "#69b054" : "#cc5454"} />`
        )}
        <circle cx="961.700" cy="1472.300" r="34.500" fill="#fef1e9" />
        <g fill="none" stroke="#d9601a" stroke-width="3">
          <path d="M960 1457.500H946.500V1471M948 1459L958.500 1469.500" />
          <path d="M963 1487.500H976.500V1474M975 1486L964.500 1475.500" />
        </g>
      </svg>
      <div class="legend"><i class="sq"></i>套牢<i class="sq red"></i>获利</div>
      ${this.row("获利比例", "10.05%", "first")} ${this.row("平均成本", "33.13")}
      <div class="seg"><span class="on">90%筹码</span><span>70%筹码</span></div>
      ${this.row("价格区间", "31.24-34.21")} ${this.row("集中度", "4.54%")}
      <div class="row">
        <span class="note">说明
          <svg width="30" height="30" viewBox="0 0 30 30">
            <circle cx="15" cy="15" r="15" fill="#ccc" />
            <path d="M15 12.500V22.500M15 7.200V9.500" stroke="#fff" stroke-width="3.400" />
          </svg>
        </span>
        <b class="stamp">2025-10-31 10:45</b>
      </div>`;
  }
}

/* ---------- bottom bar ---------- */

@customElement("bottom-bar")
export class BottomBar extends LitElement {
  static styles = [
    base,
    css`
      :host {
        height: 177px;
        background: #f7f8fa;
        border-top: 2px solid #d9dbdd;
      }
      .row {
        display: grid;
        grid-template-columns: 274px repeat(4, 225.5px);
      }
      .index {
        display: flex;
        flex-direction: column;
        align-items: center;
        padding-top: 9px;
        white-space: nowrap;
      }
      .tri {
        border: 10.5px solid transparent;
        border-bottom: 7px solid #808080;
        border-top: 0;
        margin-left: 2px;
      }
      .value {
        font-size: 41px;
        line-height: 50px;
        letter-spacing: -1.4px;
        color: #d02c2c;
        margin: 9px 0 0 1px;
      }
      .sector {
        display: flex;
        align-items: center;
        gap: 18px;
        line-height: 48px;
        font-size: 35.5px;
        color: #666;
        padding-left: 6px;
      }
      .pct {
        font-size: 38px;
        letter-spacing: -0.6px;
        color: #d02c2c;
        padding-top: 1px;
      }
      .item {
        display: flex;
        flex-direction: column;
        align-items: center;
        padding-top: 4px;
        font-size: 35.5px;
        line-height: 52px;
        color: #666;
        gap: 6px;
      }
      .item svg {
        fill: none;
        stroke: #666;
        stroke-width: 3px;
        stroke-linecap: round;
        stroke-linejoin: round;
      }
      .item .solid {
        fill: #666;
        stroke: none;
      }
    `,
  ];
  render() {
    return html`<div class="row">
      <div class="index">
        <i class="tri"></i>
        <span class="value">3503.80</span>
        <span class="sector">专用设备<span class="pct">0.98%</span></span>
      </div>
      <div class="item">
        <svg width="70" height="70" viewBox="352 2229 70 70">
          <path d="M371.500 2242A27 27 0 0 1 412.500 2275M405 2285.500A27 27 0 0 1 363 2251" />
          <path d="M355 2253.500Q359 2253 363.500 2250.500L363 2257M419 2274Q415 2275 412.500 2277.500L412.800 2270" />
          <path d="M379.500 2251L387.500 2262L395.500 2251M387.500 2262V2278M378 2262H397.500M378 2270.500H397.500" />
        </svg>
        交易
      </div>
      <div class="item">
        <svg width="70" height="70" viewBox="578 2229 70 70">
          <path d="M623 2238.500H595Q588 2238.500 588 2245.500V2282.500Q588 2289.500 595 2289.500H631.500Q638.500 2289.500 638.500 2282.500V2256" />
          <path class="solid" d="M605 2273L607 2264L628.500 2243.500L633 2248L611.500 2269.500ZM630.500 2241.500L634.500 2238Q638 2236 639.500 2239Q640.500 2241.500 638.500 2243.500L635 2246.500Z" />
        </svg>
        发帖
      </div>
      <div class="item">
        <svg width="70" height="70" viewBox="804 2229 70 70">
          <rect x="814.500" y="2239" width="21" height="22" rx="4" />
          <rect x="814.500" y="2266.500" width="21" height="22" rx="4" />
          <rect x="841.500" y="2266.500" width="21" height="22" rx="4" />
          <path d="M850 2239.500Q852 2237.500 854 2239.500L863 2248.500Q865 2250.500 863 2252.500L854 2261.500Q852 2263.500 850 2261.500L841 2252.500Q839 2250.500 841 2248.500Z" />
        </svg>
        功能
      </div>
      <div class="item">
        <svg width="70" height="70" viewBox="1028 2229 70 70">
          <circle cx="1063" cy="2264" r="26.500" />
          <g class="solid"><circle cx="1051" cy="2264" r="3" /><circle cx="1063" cy="2264" r="3" /><circle cx="1075" cy="2264" r="3" /></g>
        </svg>
        设自选
      </div>
    </div>`;
  }
}

/* ---------- page ---------- */

@customElement("app-root")
export class AppRoot extends LitElement {
  static styles = [
    base,
    css`
      :host {
        width: 1176px;
        height: 2400px;
        background: #fff;
        overflow: hidden;
      }
      .page {
        display: flex;
        flex-direction: column;
        height: 2400px;
      }
      .main {
        display: flex;
        gap: 19px;
        padding-left: 12px;
        height: 1335px;
      }
      .charts {
        width: 776px;
      }
      .first {
        margin-top: 1px;
      }
      .second {
        margin-top: 1.5px;
      }
      .card {
        flex: 1;
        margin: 0 22px;
        background: #fcefe6;
        border-radius: 38px 38px 0 0;
        height: 60px;
      }
      .peek {
        height: 12px;
        overflow: hidden;
        display: flex;
        align-items: flex-start;
      }
      bottom-bar {
        flex: none;
      }
    `,
  ];

  private readonly inst = [0, 22.5, 22.5, 32, 38, 45.5, 65, 75, 72.5, 94.5, 117, 146, 183, 230];
  private readonly retail = [100, 126, 17.5, 21.5, 108, 38.5, 129.5, 132, 87.5, 119, 119, 69, 25.5, 0];

  render() {
    return html`<div class="page">
      <status-bar></status-bar>
      <stock-header></stock-header>
      <promo-banner></promo-banner>
      <quote-panel></quote-panel>
      <news-row></news-row>
      <period-tabs></period-tabs>
      <ma-strip></ma-strip>
      <div class="main">
        <div class="charts">
          <price-chart></price-chart>
          <indicator-chart class="first" name="机构监控" expander .zero=${62.5} .values=${this.inst} .labels=${["3.911", "-10.587"]}></indicator-chart>
          <indicator-chart class="second" name="散户监控" .zero=${230} .values=${this.retail} .labels=${["3.892", "0.000"]}></indicator-chart>
          <time-axis></time-axis>
        </div>
        <chip-panel></chip-panel>
      </div>
      <div class="peek"><div class="card"></div></div>
      <bottom-bar></bottom-bar>
    </div>`;
  }
}
